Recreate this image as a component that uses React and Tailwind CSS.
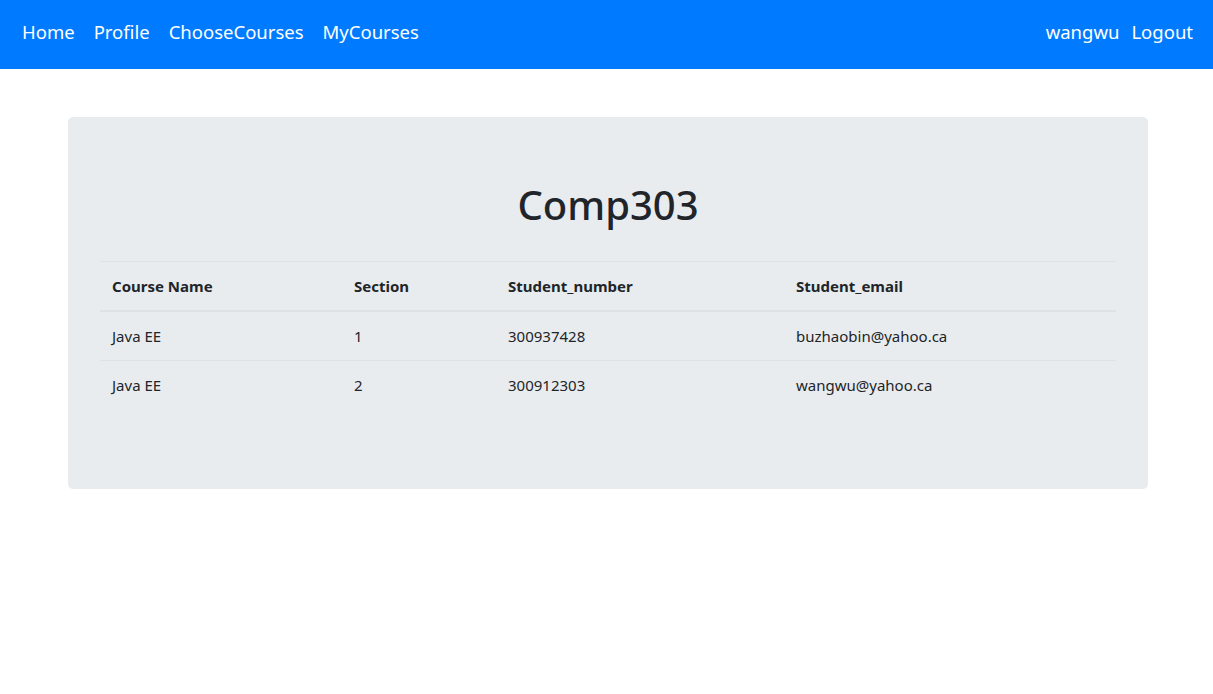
import React from "react";

const rows = [
  { course: "Java EE", section: "1", number: "300937428", email: "buzhaobin@yahoo.ca" },
  { course: "Java EE", section: "2", number: "300912303", email: "wangwu@yahoo.ca" },
];

const App = () => {
  return (
    <div className="min-h-[694px] bg-white text-[#212529]" style={{ fontFamily: '"Noto Sans", "Open Sans", sans-serif' }}>
      <nav className="h-[69px] bg-[#007bff] flex items-center justify-between px-[14px] pb-[6px] text-white text-[18.5px]">
        <div className="flex items-center">
          <a className="px-2">Home</a>
          <a className="px-2 ml-[3px]">Profile</a>
          <a className="px-2 ml-[3px]">ChooseCourses</a>
          <a className="px-2 ml-[3px]">MyCourses</a>
        </div>
        <div className="flex items-center">
          <a className="px-[6px]">wangwu</a>
          <a className="px-[6px]">Logout</a>
        </div>
      </nav>

      <div className="pl-[68px] pr-[65px] pt-12">
        <div className="bg-[#e9ecef] rounded-[5px] px-8 pt-16 pb-[80px]">
          <h1 className="text-center text-[40px] leading-[48px] font-medium">Comp303</h1>
          <table className="w-full mt-8 text-[15px] leading-6 border-collapse">
            <thead>
              <tr className="border-t border-[#dee2e6] border-b-2">
                <th className="text-left font-bold p-3 w-[242px]">Course Name</th>
                <th className="text-left font-bold p-3 w-[154px]">Section</th>
                <th className="text-left font-bold p-3 w-[288px]">Student_number</th>
                <th className="text-left font-bold p-3">Student_email</th>
              </tr>
            </thead>
            <tbody>
              {rows.map((r, i) => (
                <tr key={i} className={i > 0 ? "border-t border-[#dee2e6]" : ""}>
                  <td className="p-3">{r.course}</td>
                  <td className="p-3">{r.section}</td>
                  <td className="p-3">{r.number}</td>
                  <td className="p-3">{r.email}</td>
                </tr>
              ))}
            </tbody>
          </table>
        </div>
      </div>
    </div>
  );
};

export default App;
